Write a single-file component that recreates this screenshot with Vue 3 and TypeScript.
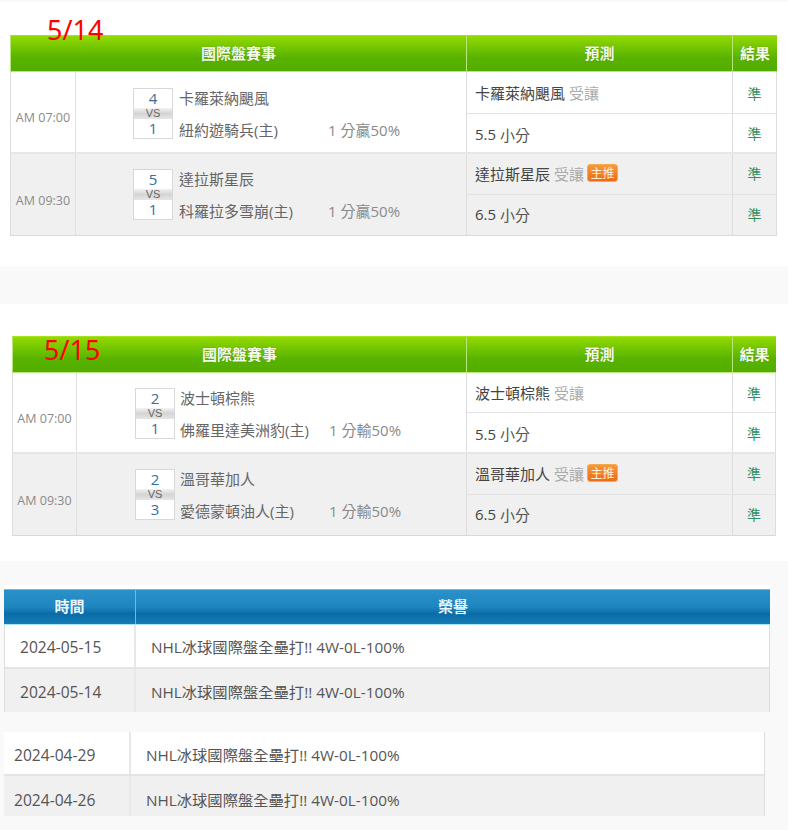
<script setup lang="ts">
interface Game {
  time: string
  home: number
  away: number
  teamA: string
  teamB: string
  spread: string
  pick: string
  total: string
  badge: boolean
}
interface Day {
  label: string
  cls: string
  games: Game[]
}
const days: Day[] = [
  {
    label: '5/14',
    cls: 'first',
    games: [
      { time: 'AM 07:00', home: 4, away: 1, teamA: '卡羅萊納颶風', teamB: '紐約遊騎兵(主)', spread: '1 分贏50%', pick: '卡羅萊納颶風', total: '5.5', badge: false },
      { time: 'AM 09:30', home: 5, away: 1, teamA: '達拉斯星辰', teamB: '科羅拉多雪崩(主)', spread: '1 分贏50%', pick: '達拉斯星辰', total: '6.5', badge: true },
    ],
  },
  {
    label: '5/15',
    cls: 'second',
    games: [
      { time: 'AM 07:00', home: 2, away: 1, teamA: '波士頓棕熊', teamB: '佛羅里達美洲豹(主)', spread: '1 分輸50%', pick: '波士頓棕熊', total: '5.5', badge: false },
      { time: 'AM 09:30', home: 2, away: 3, teamA: '溫哥華加人', teamB: '愛德蒙頓油人(主)', spread: '1 分輸50%', pick: '溫哥華加人', total: '6.5', badge: true },
    ],
  },
]
const honorsA = [
  { date: '2024-05-15', text: 'NHL冰球國際盤全壘打!! 4W-0L-100%' },
  { date: '2024-05-14', text: 'NHL冰球國際盤全壘打!! 4W-0L-100%' },
]
const honorsB = [
  { date: '2024-04-29', text: 'NHL冰球國際盤全壘打!! 4W-0L-100%' },
  { date: '2024-04-26', text: 'NHL冰球國際盤全壘打!! 4W-0L-100%' },
]
</script>

<template>
  <div class="page">
    <div class="strip"></div>
    <section v-for="d in days" :key="d.label" class="day" :class="d.cls">
      <div class="board">
        <span class="stamp">{{ d.label }}</span>
        <div class="head">
          <div class="hc">國際盤賽事</div>
          <div class="hc">預測</div>
          <div class="hc">結果</div>
        </div>
        <div v-for="(g, i) in d.games" :key="i" class="game" :class="{ alt: i === 1 }">
          <div class="time">{{ g.time }}</div>
          <div class="match">
            <div class="score">
              <div class="num">{{ g.home }}</div>
              <div class="vs">VS</div>
              <div class="num">{{ g.away }}</div>
            </div>
            <div class="teams">
              <div class="team">{{ g.teamA }}</div>
              <div class="team lower">
                <span class="tname">{{ g.teamB }}</span>
                <span class="spread">{{ g.spread }}</span>
              </div>
            </div>
          </div>
          <div class="pred">
            <div class="pred-row">
              <div class="pick">
                {{ g.pick }} <span class="muted">受讓</span>
                <span v-if="g.badge" class="badge">主推</span>
              </div>
              <div class="res">準</div>
            </div>
            <div class="pred-row">
              <div class="pick">{{ g.total }} <span class="small">小分</span></div>
              <div class="res">準</div>
            </div>
          </div>
        </div>
      </div>
      <div class="gap-band"></div>
    </section>

    <section class="honors">
      <div class="hon-a">
        <div class="hon-head">
          <div class="hon-hc first-col">時間</div>
          <div class="hon-hc">榮譽</div>
        </div>
        <div v-for="(h, i) in honorsA" :key="h.date" class="hon-row" :class="{ alt: i === 1 }">
          <div class="date">{{ h.date }}</div>
          <div class="txt">{{ h.text }}</div>
        </div>
      </div>
      <div class="hon-b">
        <div v-for="(h, i) in honorsB" :key="h.date" class="hon-row" :class="{ alt: i === 1 }">
          <div class="date">{{ h.date }}</div>
          <div class="txt">{{ h.text }}</div>
        </div>
      </div>
    </section>
  </div>
</template>

<style scoped>
.page {
  width: 788px;
  height: 830px;
  overflow: hidden;
  background: #fff;
  font-family: "Open Sans", "Noto Sans CJK TC", sans-serif;
  color: #555;
}
.strip {
  height: 2px;
  background: #f9f9f9;
}
.day.first {
  padding: 33px 11px 0 10px;
}
.day.second {
  padding: 32px 12px 0 12px;
}
.first .gap-band {
  height: 38px;
  margin: 30px -11px 0 -10px;
  background: #f9f9f9;
}
.second .gap-band {
  display: none;
}
.board {
  position: relative;
  box-sizing: border-box;
}
.stamp {
  position: absolute;
  left: 37px;
  top: -23px;
  font-family: "Noto Sans", "Open Sans", sans-serif;
  font-size: 27px;
  line-height: 36px;
  color: #f00;
  z-index: 2;
}
.second .stamp {
  left: 32px;
  top: -4px;
}
.head {
  display: grid;
  grid-template-columns: 456px 266px 1fr;
  height: 37px;
  box-sizing: border-box;
  border-top: 1px solid #a6e21e;
  border-bottom: 1px solid #b9e678;
  background: linear-gradient(#92da00, #58b300 62%, #52ad00);
}
.second .head {
  grid-template-columns: 454px 266px 1fr;
}
.hc {
  display: flex;
  align-items: center;
  justify-content: center;
  padding-bottom: 2px;
  color: #f4fbe6;
  font-size: 15px;
  font-weight: 700;
  text-shadow: 0 0 1px #3a7a00;
  border-left: 1px solid #b9e678;
}
.game {
  display: grid;
  grid-template-columns: 65px 391px 1fr;
  height: 82px;
  box-sizing: border-box;
  border-left: 1px solid #ddd;
  border-right: 1px solid #ddd;
  border-bottom: 2px solid #e6e6e6;
  background: #fff;
}
.game.alt {
  background: #f0f0f0;
  border-bottom: 1px solid #d8d8d8;
}
.second .game {
  grid-template-columns: 64px 390px 1fr;
  height: 81px;
}
.second .game.alt {
  height: 82px;
}
.time {
  display: flex;
  align-items: center;
  justify-content: center;
  font-size: 12.5px;
  color: #8a8a8a;
  border-right: 1px solid #e0e0e0;
  padding-top: 11px;
}
.match {
  display: flex;
  padding: 15px 0 0 57px;
  border-right: 1px solid #ddd;
}
.first .game:not(.alt) .match {
  padding-top: 16px;
}
.second .match {
  padding-left: 58px;
}
.score {
  width: 40px;
  height: 51px;
  box-sizing: border-box;
  border: 1px solid #d8d8d8;
  background: #fff;
  flex: none;
}
.num {
  height: 19px;
  line-height: 19px;
  text-align: center;
  font-size: 15px;
  color: #33709c;
}
.vs {
  height: 11px;
  line-height: 11px;
  text-align: center;
  font-family: "Liberation Sans", sans-serif;
  font-size: 11px;
  font-weight: 400;
  color: #666;
  background: linear-gradient(#f2f2f2, #d4d4d4 50%, #e6e6e6);
}
.teams {
  margin-left: 6px;
  flex: 1;
  font-size: 15px;
  color: #666;
}
.second .teams {
  margin-left: 5px;
}
.team {
  height: 32px;
  line-height: 20px;
}
.lower {
  display: grid;
  grid-template-columns: 149px auto;
}
.tname {
  white-space: nowrap;
}
.spread {
  color: #8a8a8a;
  white-space: nowrap;
}
.pred {
  display: flex;
  flex-direction: column;
}
.pred-row {
  flex: 1;
  display: grid;
  grid-template-columns: 265px 1fr;
  border-top: 1px solid #e2e2e2;
}
.pred-row:first-child {
  border-top: none;
}
.first .game:not(.alt) .pred-row:first-child {
  flex: 0 0 41px;
}
.pick {
  display: flex;
  align-items: center;
  gap: 4px;
  padding-left: 8px;
  font-size: 15px;
  color: #444;
  white-space: nowrap;
}
.game:not(.alt) .pred-row:last-child .pick {
  padding-top: 2px;
}
.game.alt .pick,
.game.alt .res {
  padding-bottom: 2px;
}
.muted {
  color: #aaa;
}
.small {
  color: #555;
}
.badge {
  display: inline-block;
  width: 31px;
  height: 18px;
  line-height: 17px;
  margin-left: -1px;
  text-align: center;
  font-size: 12px;
  color: #ffeeda;
  border-radius: 3px;
  border: 1px solid #f7a94f;
  box-sizing: border-box;
  background: linear-gradient(#f59a3a, #ec6c14);
}
.res {
  display: flex;
  align-items: center;
  justify-content: center;
  font-size: 14px;
  color: #2f8f63;
  border-left: 1px solid #ddd;
}
.honors {
  height: 269px;
  margin-top: 25px;
  background: #f9f9f9;
  padding-top: 24px;
  box-sizing: border-box;
}
.hon-a {
  width: 766px;
  margin-left: 4px;
  background: #fff;
  padding-top: 4px;
  box-sizing: border-box;
}
.hon-b {
  width: 761px;
  margin: 20px 0 0 4px;
}
.hon-head {
  display: grid;
  grid-template-columns: 132px 1fr;
  height: 36px;
  box-sizing: border-box;
  border-top: 1px solid #5cc3e4;
  border-bottom: 1px solid #a6e4f2;
  background: linear-gradient(#2b91c9, #1f85bf 50%, #0a6ca7 70%, #167cb6);
}
.hon-hc {
  display: flex;
  align-items: center;
  justify-content: center;
  padding-bottom: 3px;
  color: #eef7fb;
  font-size: 15px;
  font-weight: 700;
}
.first-col {
  border-right: 1px solid #5cc3e4;
}
.hon-row {
  display: grid;
  grid-template-columns: 131px 1fr;
  height: 44px;
  box-sizing: border-box;
  background: #fff;
  border-right: 1px solid #ddd;
  border-bottom: 2px solid #e4e4e4;
  font-size: 15.3px;
  color: #555;
}
.hon-row.alt {
  background: #f0f0f0;
  border-bottom: none;
  height: 43px;
}
.hon-a .hon-row {
  border-left: 1px solid #ddd;
}
.hon-b .hon-row {
  grid-template-columns: 127px 1fr;
}
.hon-b .hon-row.alt {
  height: 40px;
}
.date,
.txt {
  padding-top: 11px;
  line-height: 22px;
  white-space: nowrap;
}
.date {
  padding-left: 15px;
  font-size: 15.6px;
  border-right: 2px solid #e8e8e8;
}
.txt {
  padding-left: 15px;
}
.hon-a .alt .date,
.hon-a .alt .txt {
  padding-top: 12px;
}
.hon-b .date,
.hon-b .txt {
  padding-top: 12px;
}
.hon-b .date {
  padding-left: 10px;
}
.hon-b .alt .date,
.hon-b .alt .txt {
  padding-top: 13px;
}
</style>
